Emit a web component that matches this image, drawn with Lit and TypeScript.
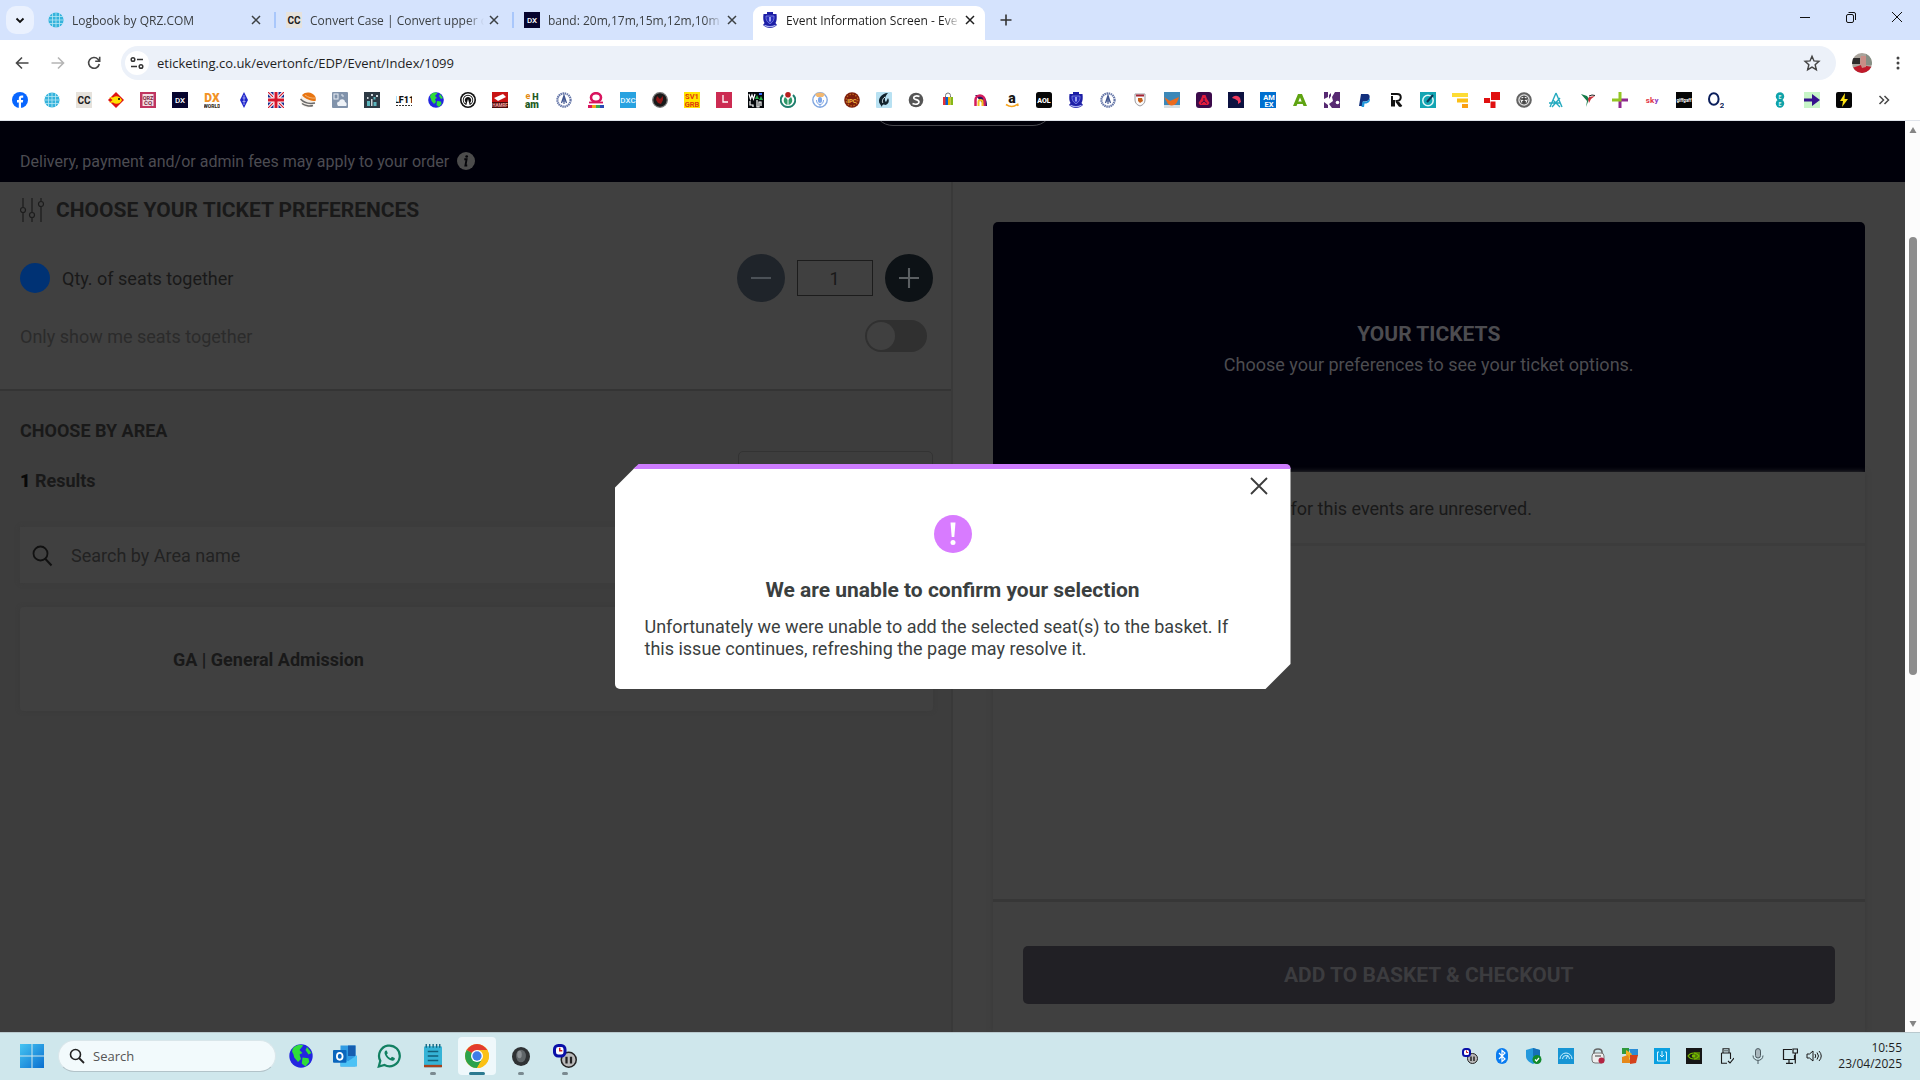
import { LitElement, html, css, svg, TemplateResult } from "lit";
import { customElement, state } from "lit/decorators.js";
import { classMap } from "lit/directives/class-map.js";

type Art = TemplateResult;

/* Short lettering used inside favicons; stays real text. */
const label = (t: string, x: number, y: number, size: number, fill: string, weight = 700) =>
  svg`<text x=${x} y=${y} font-size=${size} fill=${fill} font-weight=${weight} text-anchor="middle" font-family="Roboto, Liberation Sans, sans-serif">${t}</text>`;

const globeGrid: Art = svg`<circle cx="8" cy="8" r="7.6" fill="#35b3dc"/><path d="M0.5 4.5h15M0.5 8h15M0.5 11.5h15M4.5 1v14M8 0v16M11.500 1v14" stroke="#b5e6f4" stroke-width=".8" fill="none"/>`;
const dxDark: Art = svg`<rect width="16" height="16" fill="#06042e"/>${label("DX", 8, 11, 8, "#fff", 500)}`;
const cc: Art = svg`<rect width="16" height="16" fill="#e6e2dc"/>${label("CC", 8, 12, 10, "#1c1c1c")}`;
const earth: Art = svg`<circle cx="8" cy="8" r="7.800" fill="#2326e0"/><path d="M2.500 3c2-2.500 5-3 7-2L7 4l2 2-2 1 1 3-2 2-2.500-3L3 7 2 5zM9 9l4 .5.500 2.500-2.500 3-2.500-2zM12 2l3 4-2 1-2-3z" fill="#2fdc3a"/>`;
const crest: Art = svg`<path d="M5 0h6v2h3.500c.5 4 .3 7-1 9L15 13c-2 2-4.500 3-7 3s-5-1-7-3l1.500-2c-1.300-2-1.500-5-1-9H5z" fill="#1d1fa6"/><path d="M4 4h8c.3 4-1 6-4 7.800C5 10 3.700 8 4 4z" fill="#2a2dbf" stroke="#8d96e6" stroke-width=".7"/><path d="M7 5h2v4.500H7z" fill="#9aa2ef"/><path d="M2.500 13.200q5.500 3 11 0" stroke="#a8b0f0" stroke-width="1.200" fill="none"/>`;
const laurel: Art = svg`<circle cx="8" cy="8" r="6.600" fill="#fff" stroke="#6576a8" stroke-width="2.200" stroke-dasharray="1.500 .6"/><path d="M8 3v9M5.500 11L8 3.500l2.500 7.500M6 9h4" stroke="#40558f" stroke-width="1.200" fill="none"/>`;
const clockBot: Art = svg`<circle cx="10.500" cy="10.500" r="5" fill="#b9b9b9" stroke="#222" stroke-width="1"/><path d="M9 8.500v4.500M12 8.500v4.500" stroke="#222" stroke-width="1.500"/><rect x="1" y="1" width="7" height="7" rx="2.500" fill="#fff" stroke="#0a10a8" stroke-width="2"/><path d="M4.500 2.500v2h1.700" stroke="#c22" stroke-width="1" fill="none"/>`;

const bookmarks: Array<[string, Art | null]> = [
  ["Facebook", svg`<circle cx="8" cy="8" r="8" fill="#0866ff"/><path d="M6.800 16v-5.500H5V8h1.800V6.500c0-2 1-3 3-3h1.400v2.200H10c-.8 0-1 .4-1 1.100V8h2.200l-.4 2.500H9V16z" fill="#fff"/>`],
  ["QRZ", globeGrid],
  ["Convert Case", cc],
  ["Fish", svg`<path d="M8 0l8 8-8 8-8-8z" fill="#e01212"/><path d="M4.500 8L1 5l4 .5C8 3 12 4 14 8c-2 4-6 5-9 2.500L1 11z" fill="#ffe100"/><circle cx="11" cy="7" r="1" fill="#000"/>`],
  ["QRZCQ", svg`<rect width="16" height="16" fill="#c03560"/><rect x="2.500" y="2" width="11" height="12" fill="#f4dfe4"/>${label("QRZ", 8, 7.5, 5.5, "#7a2440")}${label("CQ", 8, 13.3, 6, "#7a2440")}`],
  ["DX", dxDark],
  ["DX World", svg`${label("DX", 8, 10, 12, "#f29325", 900)}${label("WORLD", 8, 15.5, 5, "#3d3126", 900)}`],
  ["Diamond", svg`<path d="M8 0l4 8-4 8-4-8z" fill="#1f25c9"/><path d="M8 3v10M6.500 6h3M6.500 9.500h3" stroke="#a6aaf2" stroke-width=".9"/>`],
  ["UK", svg`<rect width="16" height="16" fill="#1b2c8c"/><path d="M0 0l16 16M16 0L0 16" stroke="#fff" stroke-width="3.200"/><path d="M0 0l16 16M16 0L0 16" stroke="#d5172c" stroke-width="1.200"/><path d="M8 0v16M0 8h16" stroke="#fff" stroke-width="5"/><path d="M8 0v16M0 8h16" stroke="#d5172c" stroke-width="3"/>`],
  ["Sphere", svg`<circle cx="8" cy="8" r="7.600" fill="#f5efe8"/><path d="M2 3C6-1 13 0 15.500 5c.5 2 .3 3 0 4C11 9 5 7 2 3z" fill="#e87511"/><path d="M5 3c3 2.500 7 3.500 10.500 3" stroke="#f9c48d" stroke-width=".8" fill="none"/><path d="M.5 7c4 4.500 9 5 14.500 4M2 11.500c3 2.500 8 3 11 2" stroke="#6a6a6a" stroke-width="1.500" fill="none"/>`],
  ["Weather", svg`<rect width="16" height="16" rx="1" fill="#8193ab"/><path d="M6 14c-2-3 0-5 1-4 1-4 6-3 6 0 2 0 2 4 1 4z" fill="#eef2f7"/><rect x="2" y="2" width="4" height="5" fill="none" stroke="#e9eef5"/><path d="M9 3h2v2" stroke="#dfe6ef" fill="none"/>`],
  ["City", svg`<rect width="16" height="16" fill="#2d3a44"/><path d="M3 9h3v5H3zM9.500 5h2v2.500h-2zM9.500 10h3v4h-3z" fill="#5bb5bd"/><path d="M7 2h2v2H7zM12 3h2v2h-2zM7 7h1.500v7H7zM3 5h1.500v2H3z" fill="#cfd8dc"/>`],
  ["LF11", svg`${label("LF11", 8, 10.5, 9, "#111", 900)}<path d="M0 13.500h16" stroke="#333" stroke-dasharray="2 1"/>`],
  ["Earth", earth],
  ["Antenna", svg`<circle cx="8" cy="8" r="8" fill="#111"/><g fill="none" stroke="#fff" stroke-width="1.200"><circle cx="8" cy="8" r="5.800"/><path d="M5.500 11a3.800 3.800 0 1 1 5 0"/></g><path d="M8 7l2 7H6z" fill="#fff"/>`],
  ["Red banner", svg`<rect width="16" height="16" fill="#c81414"/><path d="M2 6l9-4 3 3-8 4z" fill="#fff"/><rect y="10" width="16" height="6" fill="#4d0b0b"/>${label("HAMRF", 8, 15, 4.5, "#f4a8a0")}`],
  ["eHam", svg`${label("e", 4, 7, 9, "#e38b12")}${label("H", 11.5, 7.5, 9, "#1e5a1e", 900)}${label("am", 8, 15.5, 10, "#1e5a1e", 900)}`],
  ["Laurel", laurel],
  ["Omega", svg`<ellipse cx="8" cy="5.500" rx="5" ry="4.300" fill="none" stroke="#d8145e" stroke-width="2.600"/><path d="M0 13h4v3H0z" fill="#d8145e"/><path d="M4 13h4v3H4z" fill="#f2a51c"/><path d="M8 13h4v3H8z" fill="#35a853"/><path d="M12 13h4v3h-4z" fill="#294bb5"/><path d="M1 10.500h14" stroke="#d8145e" stroke-width="1.800"/>`],
  ["DXC", svg`<rect width="16" height="16" fill="#28a2e0"/>${label("DXC", 8, 11, 8, "#e5f6ff", 500)}`],
  ["Dial", svg`<circle cx="8" cy="8" r="7.300" fill="#191919" stroke="#777" stroke-width="1.300"/><path d="M5 4l3 3 3-3v4l-2 4-3-1-2-3z" fill="#8f1616"/>`],
  ["SV1GRB", svg`<rect width="16" height="16" fill="#ffe500"/>${label("SV1", 8, 7.3, 7.5, "#e03a0c")}${label("GRB", 8, 15, 7.5, "#e03a0c")}`],
  ["L", svg`<rect width="16" height="16" fill="#cc2b52"/><path d="M7 3v7h5" stroke="#fff" stroke-width="1.300" fill="none"/>`],
  ["WSJT", svg`<rect width="16" height="16" fill="#05080c"/><path d="M1 2l1.500 5L4 3l1.500 4L7 2M2 9v4h3v2M9 8v7h2v-5h2v4" stroke="#fff" fill="none" stroke-width="1.200"/><path d="M7 7l2-4 2 4zM11 8l2-4 2 4z" fill="#28b04a"/><path d="M11 2h3" stroke="#3d6cff" stroke-width="2"/>`],
  ["Wreath", svg`<path d="M3 3C-2 8 2 15 8 15s10-7 5-12" fill="none" stroke="#1f7f6d" stroke-width="2"/><path d="M5 5c-3 4 0 8 3 8s6-4 3-8L8 8z" fill="#2f9868"/><circle cx="8" cy="2.800" r="2.800" fill="#b51e1e"/><path d="M8 7v6" stroke="#fff"/>`],
  ["Microphone", svg`<circle cx="8" cy="8" r="7.200" fill="#fff" stroke="#82a8e0" stroke-width="1.400"/><rect x="6" y="5" width="4" height="6" rx="2" fill="#7da6e8"/><path d="M4.500 8c0 6 7 6 7 0M8 12v3" stroke="#7da6e8" fill="none"/><path d="M3 2q5-3 10 0l-2 3H5z" fill="#f2b871"/>`],
  ["IPC", svg`<circle cx="8" cy="8" r="7.800" fill="#7d1e0b"/><circle cx="8" cy="8" r="5.800" fill="none" stroke="#c46a1c" stroke-width="1.200" stroke-dasharray="1.500 1.500"/>${label("IPC", 8, 10.500, 6, "#f6c14b")}`],
  ["Ink", svg`<rect width="16" height="16" rx="1" fill="#b8e1f2"/><path d="M12 1C5 1 1 8 4 12l2 3c0-2 1-3 3-2 3 0 5-4 3-7l-2 4c-2-2-1-6 2-9z" fill="#12222c"/><path d="M9 5c-3 2-3 5-2 6" stroke="#e9f7fc" fill="none"/>`],
  ["S", svg`<circle cx="8" cy="8" r="7.300" fill="#555"/><path d="M11.500 4.500C8 3 5 4.500 6 6.500c1 1.500 5 1 5 3.500 0 2-3 3-6.500 1.500" stroke="#fff" stroke-width="1.700" fill="none"/>`],
  ["eBay", svg`<path d="M5.500 5V3.500a2.500 2.500 0 0 1 5 0V5" fill="none" stroke="#777"/><path d="M3 5h3v8H3z" fill="#e53238"/><path d="M5.500 5H8v8H5.500z" fill="#0064d2"/><path d="M8 5h2.500v8H8z" fill="#f5af02"/><path d="M10.500 5H13v8h-2.500z" fill="#86b817"/>`],
  ["Arch", svg`<path d="M3 3h5c4 0 7 4 7 11h-2" fill="#2b1460"/><path d="M3.500 14V8a4.500 4.500 0 0 1 9 0v6" stroke="#d41c5c" stroke-width="2.500" fill="none"/><path d="M6.500 14v-4a2 2 0 0 1 4 0v4" stroke="#f5c324" stroke-width="2" fill="none"/>`],
  ["Amazon", svg`${label("a", 8, 10.500, 14, "#161616", 900)}<path d="M2 12.500q6 4 11 0M13.500 11.500l.5 2.500" stroke="#f7a51e" stroke-width="1.600" fill="none"/>`],
  ["AOL", svg`<rect width="16" height="16" rx="2.500" fill="#060606"/>${label("AOL", 8, 10.500, 7, "#fff", 900)}`],
  ["Everton", crest],
  ["Laurel crest", laurel],
  ["Shield", svg`<path d="M3 2h10v6c0 3-2 5-5 6-3-1-5-3-5-6z" fill="#fafafa" stroke="#9c9aa0"/><path d="M4 2.500h8v2H4z" fill="#a42535"/><path d="M6 6h4l1 3-3 2-2-2z" fill="#c5611c"/>`],
  ["Fox", svg`<rect width="16" height="16" fill="#3c88b8"/><rect y="13" width="16" height="3" fill="#d7dee2"/><path d="M0 5l6 4 9-4c-1 3-2 7-5 8-3 1-6 0-7-3z" fill="#ec6a1c"/>`],
  ["NatWest", svg`<rect width="16" height="16" rx="3" fill="#3b0a4a"/><path d="M6.500 3h3l1.500 4 2.500 4-1.500 2H4l-1.500-2 2.500-4z" fill="#e21b3c"/><path d="M8 6v3l-3 2.500M8 9l3 2.500" stroke="#3b0a4a" fill="none"/>`],
  ["Swoosh", svg`<rect width="16" height="16" fill="#0c1140"/><path d="M4 6c2-3 6-3 8 0l1 4-3 2V9L7 7z" fill="#ee3a5c"/>`],
  ["Amex", svg`<rect width="16" height="16" fill="#006fcf"/>${label("AM", 9, 8, 7.5, "#fff")}${label("EX", 9, 14.5, 7.5, "#fff")}`],
  ["A", svg`<path d="M6 2h4l5 12h-3.500L8 5.500 4.500 14H1z" fill="#5fa412"/><path d="M4 9.500h8v2.500H4z" fill="#5fa412"/>`],
  ["Pattern", svg`<rect width="16" height="16" fill="#572a72"/><path d="M4 0h7L8 5l1 4-4 3 3 4H4v-3L0 10V7l4-2z" fill="#fff"/><path d="M5 3l2-2v3L5 7zM1 12l2 2v2H0z" fill="#572a72"/><circle cx="13.500" cy="10.500" r="1.800" fill="#fff"/>`],
  ["PayPal", svg`<path d="M5 2h5.500c3 0 3.500 2 3 4-.6 2.600-2.500 3.500-5 3.500H7L6.300 14H3z" fill="#12307d"/><path d="M13.500 6c1.500 3-1 5.500-4.200 5.500H8.500L8 15H5.500l1-5.500c4 .5 6.500-.5 7-3.500z" fill="#1f97dc"/>`],
  ["R", svg`<path d="M3 2h6c5 0 5 6.500 0 7l4.500 5.500M3 5h1v9.500M6 14.500V8M8 9l4 5.500" stroke="#111" stroke-width="2" fill="none"/>`],
  ["Timer", svg`<rect width="16" height="16" fill="#13a5b3"/><circle cx="8" cy="8.500" r="5.200" fill="none" stroke="#e3f8fa" stroke-width="1.500"/><path d="M7 10l6-7" stroke="#0c3854" stroke-width="2"/>`],
  ["Steps", svg`<path d="M0 1h16v4H0z" fill="#fddc34"/><path d="M5 6.500h11v4H5z" fill="#fcbf17"/><path d="M10 12h6v4h-6z" fill="#fb9f12"/>`],
  ["Blocks", svg`<path d="M7 0h9v8H7zM0 6h6v5H0zM6.500 9.500h5V16h-5z" fill="#e01010"/>`],
  ["Seal", svg`<circle cx="8" cy="8" r="6.800" fill="#d6d6d6" stroke="#636363" stroke-width="2"/><circle cx="8" cy="8" r="4" fill="#eee" stroke="#555"/><path d="M8 4v8M5 7h6M6 10h4" stroke="#333" stroke-width="1.300"/>`],
  ["Compass", svg`<path d="M8 1l6 14M8 1L2 15M1 11h11M4 15l8-9M12 15L5 8" stroke="#24aabf" stroke-width="1.400" fill="none"/>`],
  ["Hummingbird", svg`<path d="M1 2l6 2 2 3-3 8 1-6z" fill="#137a49"/><path d="M9 5l6-1-4 3-2 4-1-4z" fill="#c9303a"/><path d="M9 4l3-1 3 .5" stroke="#222" fill="none"/>`],
  ["Plus", svg`<path d="M8 16V8" stroke="#8f278f" stroke-width="3"/><path d="M8 8h8" stroke="#8f278f" stroke-width="3"/><path d="M8 0v9.500M0 8h9.500" stroke="#93c524" stroke-width="3"/>`],
  ["Sky", svg`${label("sk", 6, 10.500, 8, "#e2353f")}${label("y", 12.500, 10.500, 8, "#8a3bc4")}`],
  ["giffgaff", svg`<rect width="16" height="16" fill="#050505"/>${label("giffgaff", 8, 10, 4.500, "#fff")}`],
  ["O2", svg`<ellipse cx="5.800" cy="7" rx="4.800" ry="5.800" fill="none" stroke="#0b1f5c" stroke-width="2"/>${label("2", 14, 16, 8, "#0b1f5c")}`],
  ["", null],
  ["EE", svg`<circle cx="8" cy="4.500" r="4.200" fill="#0fa2a8"/><circle cx="8" cy="11.500" r="4.200" fill="#0fa2a8"/>${label("E", 8, 6.500, 5, "#d8f5f6")}${label("E", 8, 13.500, 5, "#d8f5f6")}`],
  ["Arrow", svg`<rect width="16" height="16" fill="#c7f5c7"/><path d="M0 6.500h8V2l8 6-8 6V9.500H0z" fill="#35128c"/>`],
  ["Bolt", svg`<rect width="16" height="16" rx="2" fill="#050505"/><path d="M9 1L4 9h3l-1 6 6-8H8.500z" fill="#ffe311"/>`],
];

const trayIcons: Array<[string, Art]> = [
  ["Clock utility", clockBot],
  ["Bluetooth", svg`<rect x="2" width="12" height="16" rx="6" fill="#0a7cf0"/><path d="M5 5l6 6-3 2.500v-11L11 5l-6 6" stroke="#fff" stroke-width="1.200" fill="none"/>`],
  ["Security", svg`<path d="M0 2l7-2 7 2v6c0 4-3 6-7 8-4-2-7-4-7-8z" fill="#2499dc"/><path d="M7 0l7 2v6H7z" fill="#1670b8"/><circle cx="11" cy="11.500" r="4.500" fill="#118a2c"/><path d="M9 11.500l1.500 1.500 2.500-3" stroke="#fff" fill="none" stroke-width="1.200"/>`],
  ["Signal", svg`<rect width="16" height="16" fill="#1795d4"/><path d="M2 11a6 6 0 0 1 12 0M4.500 11a3.500 3.500 0 0 1 7 0M8 11l2-4" stroke="#c9f0ff" fill="none"/>`],
  ["Lock", svg`<path d="M4 6V4c0-4 8-4 8 0v2" fill="none" stroke="#666" stroke-width="1.600"/><rect x="2" y="5" width="12" height="10" rx="3" fill="#eee" stroke="#777"/><path d="M5 8h6" stroke="#777" stroke-width="1.500"/><circle cx="11.500" cy="12.500" r="3" fill="#b32442"/>`],
  ["AVG", svg`<path d="M0 0h7v6H0z" fill="#2f9a3c"/><path d="M7 1l9 0v7l-7-1z" fill="#2b8ed6"/><path d="M4 2l6 4-3 5-3-4z" fill="#f0b01e"/><path d="M0 9l6-2 3 8H0z" fill="#e5881a"/><path d="M8 7h8l-2 8-6 1z" fill="#d4421c"/>`],
  ["Updater", svg`<rect width="16" height="16" fill="#0aa0e0"/><path d="M5 4H3.500v9h9V4H11M8 3v6M6 7l2 2 2-2" stroke="#d5f3ff" fill="none"/>`],
  ["NVIDIA", svg`<rect width="16" height="16" fill="#161616"/><path d="M2 8c3-4 8-4 11 0-3 4-8 4-11 0z" fill="none" stroke="#76b900" stroke-width="1.200"/><path d="M8 4h6v8H8z" fill="#76b900" opacity=".6"/><circle cx="7.500" cy="8" r="1.800" fill="#76b900"/>`],
  ["USB", svg`<path d="M5 5V.7h6V5M3.500 5h9v6M3.500 5v10.300H9M10 13l2 2 4-5" stroke="#1b1b1b" stroke-width="1.100" fill="none"/><path d="M7 2v1.500M9 2v1.500" stroke="#1b1b1b"/>`],
  ["Microphone", svg`<rect x="5.500" y=".6" width="5" height="9.400" rx="2.500" fill="#a9b7bd" stroke="#4b5a60"/><path d="M3 7.500c0 6.500 10 6.500 10 0M8 12.500V16" stroke="#4b5a60" fill="none"/>`],
  ["Network", svg`<path d="M10 1.500H1.500v10h11V7M7 11.500V15M4 15.400h7M11 1h4.500v4H11zM13.300 5v10.500" stroke="#1b1b1b" stroke-width="1.200" fill="none"/>`],
  ["Volume", svg`<path d="M1 6h2.500L7 3v10L3.500 10H1zM9 6q1.500 2 0 4M11 4.500q3 3.500 0 7M13 3q4.500 5 0 10" stroke="#1b1b1b" fill="none"/>`],
];

const taskApps: Array<{ name: string; art: Art; state: string }> = [
  { name: "Earth", state: "", art: earth },
  { name: "Outlook", state: "", art: svg`<rect x="5" y="1" width="10" height="14" fill="#2f9be3"/><path d="M10 1h5v7h-5z" fill="#165eb0"/><path d="M5 8l5 3.500 6-4V15H5z" fill="#4cc2f5"/><rect y="4" width="9" height="8.500" rx=".6" fill="#0a66bd"/><ellipse cx="4.500" cy="8.200" rx="1.900" ry="2.300" fill="none" stroke="#fff" stroke-width="1.200"/>` },
  { name: "WhatsApp", state: "", art: svg`<path d="M1.200 15l1-3.800A6.900 6.900 0 1 1 5 14z" fill="none" stroke="#128062" stroke-width="1.500"/><path d="M5.500 4.500c-2 2 2.500 7.500 5.500 6.500 1-.5 1-1.500.8-1.700L10 8.500l-1 1C8 9 7 8 6.500 7l.7-.9-.7-1.700z" fill="#128062"/>` },
  { name: "Notepad", state: "open", art: svg`<rect x="2" y="1.500" width="12" height="14" rx=".8" fill="#35b3d6"/><path d="M2 14.700h12" stroke="#a8421c" stroke-width="1.600"/><path d="M3.500 0v2.500M5.800 0v2.500M8.100 0v2.500M10.400 0v2.500M12.500 0v2.500" stroke="#12657f" stroke-width=".9"/><path d="M4.500 5h7M4.500 8h7M4.500 11h7" stroke="#115f7a" stroke-width="1"/>` },
  { name: "Chrome", state: "active", art: svg`<circle cx="8" cy="8" r="8" fill="#fbc116"/><path d="M8 8L1.100 4A8 8 0 0 1 14.900 4z" fill="#e33b2e"/><path d="M1.100 4A8 8 0 0 0 8 16l3.500-6L8 8z" fill="#2ba24c"/><path d="M8 4h6.900A8 8 0 0 1 8 16l3.500-6z" fill="#fbc116"/><circle cx="8" cy="8" r="4" fill="#fff"/><circle cx="8" cy="8" r="3.100" fill="#3f7ce8"/>` },
  { name: "Knob", state: "open", art: svg`<ellipse cx="8" cy="8.300" rx="6" ry="6.300" fill="#2f3234"/><ellipse cx="8" cy="8" rx="3.300" ry="4.200" fill="#5f6568"/><ellipse cx="7" cy="7" rx="1.500" ry="2.500" fill="#8a8f92"/>` },
  { name: "Clock utility", state: "open", art: clockBot },
];

const icon = (art: Art | null, cls = "i16", box = "0 0 16 16") =>
  html`<svg class=${cls} viewBox=${box} aria-hidden="true">${art}</svg>`;

const cross: Art = svg`<path d="M4 4l8 8M12 4l-8 8" stroke="currentColor" stroke-width="1.500" fill="none"/>`;

const shared = css`
  :host { display: block; font-family: "Open Sans", "Noto Sans", sans-serif; color: #1f1f1f; }
  * { box-sizing: border-box; }
  button, input, select { font: inherit; color: inherit; border: 0; background: none; padding: 0; margin: 0; }
  button { display: grid; place-items: center; }
  h1, h2, h3, p { margin: 0; }
  svg { display: block; flex: none; }
  .i16 { width: 16px; height: 16px; }
  .i18 { width: 18px; height: 18px; }
  .i20 { width: 20px; height: 20px; }
  .i24 { width: 24px; height: 24px; }
`;

@customElement("browser-chrome")
class BrowserChrome extends LitElement {
  static styles = [shared, css`
    .tabs { display: flex; height: 40px; padding-left: 6px; background: #d5e3fd; }
    .tab-menu { width: 28px; height: 28px; margin: 6px 2px 0 0; border-radius: 10px; background: #eaf1fe; }
    .tab { position: relative; display: flex; align-items: center; width: 238px; height: 34px; margin-top: 6px; padding: 0 8px 6px 12px; gap: 8px; font-size: 12px; color: #3c4043; }
    .tab + .tab:not(.active)::before { content: ""; position: absolute; left: 0; top: 6px; width: 2px; height: 16px; background: #a9c7fb; }
    .tab .title { flex: 1; overflow: hidden; white-space: nowrap; mask-image: linear-gradient(90deg, #000 90%, transparent); }
    .tab .close { width: 20px; height: 20px; margin-left: -8px; }
    .tab.active { color: #1f1f1f; }
    .tab.active::after { content: ""; position: absolute; inset: 0 3px; z-index: 0; border-radius: 9px 9px 0 0; background: #fff; }
    .tab.active > * { position: relative; z-index: 1; }
    .new-tab { width: 28px; height: 28px; margin: 6px 0 0 4px; }
    .window { display: flex; margin-left: auto; }
    .window button { width: 46px; height: 34px; }
    .toolbar { display: flex; align-items: center; height: 46px; padding: 0 8px 0 4px; background: #fff; }
    .nav { width: 36px; height: 34px; color: #474747; }
    .nav.off { color: #b5b5b5; }
    .omnibox { display: flex; flex: 1; align-items: center; height: 34px; margin: 0 16px 0 9px; padding: 0 15px 0 4px; gap: 8px; border-radius: 17px; background: #ecf1f9; font-size: 13px; }
    .info { width: 24px; height: 24px; border-radius: 50%; background: #fff; }
    .omnibox input { flex: 1; min-width: 0; outline: 0; }
    .menu { width: 28px; height: 28px; margin-left: 12px; }
    .bookmarks { display: flex; align-items: center; height: 35px; padding: 0 28px 7px 12px; gap: 16px; background: #fff; border-bottom: 1px solid #dfe3ea; }
    .bookmarks a, .blank { flex: none; width: 16px; height: 16px; }
    .more { margin-left: auto; color: #474747; }
  `];

  private tabs = [
    { title: "Logbook by QRZ.COM", art: globeGrid },
    { title: "Convert Case | Convert upper c", art: cc },
    { title: "band: 20m,17m,15m,12m,10m", art: dxDark },
    { title: "Event Information Screen - Eve", art: crest },
  ];

  render() {
    return html`
      <div class="tabs">
        <button class="tab-menu" aria-label="Search tabs">${icon(svg`<path d="M4.500 6.500L8 10l3.500-3.500" stroke="#111" stroke-width="1.800" fill="none"/>`)}</button>
        ${this.tabs.map((t, i) => html`
          <div class=${classMap({ tab: true, active: i === 3 })}>
            ${icon(t.art)}<span class="title">${t.title}</span>
            <button class="close" aria-label="Close tab">${icon(cross)}</button>
          </div>`)}
        <button class="new-tab" aria-label="New tab">${icon(svg`<path d="M8 2.500v11M2.500 8h11" stroke="#333" stroke-width="1.600"/>`)}</button>
        <div class="window">
          <button aria-label="Minimise">${icon(svg`<path d="M3 8.500h10" stroke="#111"/>`)}</button>
          <button aria-label="Restore">${icon(svg`<rect x="3.500" y="5.500" width="7" height="8" rx="1.500" fill="none" stroke="#111"/><path d="M5.500 3.500H11A1.500 1.500 0 0 1 12.500 5v6" fill="none" stroke="#111"/>`)}</button>
          <button aria-label="Close">${icon(svg`<path d="M3 3l10 10M13 3L3 13" stroke="#111"/>`)}</button>
        </div>
      </div>
      <div class="toolbar">
        <button class="nav" aria-label="Back">${icon(svg`<path d="M14.500 8H2.500M8 2.500L2.500 8 8 13.500" stroke="currentColor" stroke-width="1.600" fill="none"/>`)}</button>
        <button class="nav off" aria-label="Forward">${icon(svg`<path d="M1.500 8h12M8 2.500L13.500 8 8 13.500" stroke="currentColor" stroke-width="1.600" fill="none"/>`)}</button>
        <button class="nav" aria-label="Reload">${icon(svg`<path d="M13.300 9A5.400 5.400 0 1 1 12 4.200L13.500 6M13.700 1.800V6.300H9.200" stroke="currentColor" stroke-width="1.600" fill="none"/>`)}</button>
        <div class="omnibox">
          <button class="info" aria-label="Site information">${icon(svg`<g fill="none" stroke="#333" stroke-width="1.500"><circle cx="4" cy="4.500" r="1.800"/><path d="M8 4.500h6M2 11.500h6"/><circle cx="12" cy="11.500" r="1.800"/></g>`)}</button>
          <input aria-label="Address" .value=${"eticketing.co.uk/evertonfc/EDP/Event/Index/1099"} />
          <button aria-label="Bookmark this tab">${icon(svg`<path d="M10 2.500l2.200 5.200 5.500.5-4.200 3.700 1.300 5.500L10 14.500l-4.800 2.900 1.300-5.500-4.200-3.700 5.500-.5z" stroke="#444" stroke-width="1.600" fill="none"/>`, "i18", "0 0 20 20")}</button>
        </div>
        <button aria-label="Profile">${icon(svg`<defs><clipPath id="av"><circle cx="10" cy="10" r="10"/></clipPath></defs><g clip-path="url(#av)"><rect width="20" height="20" fill="#a9a39b"/><path d="M0 5h8v6H0z" fill="#2d2b2a"/><path d="M14 0h6v12h-6z" fill="#868f85"/><path d="M0 20v-5l9-3 11 2v6z" fill="#c0192a"/><path d="M9 3h5v11l-4 1-2-5z" fill="#c98d86"/></g>`, "i20", "0 0 20 20")}</button>
        <button class="menu" aria-label="Menu">${icon(svg`<g fill="#444"><circle cx="8" cy="3" r="1.500"/><circle cx="8" cy="8" r="1.500"/><circle cx="8" cy="13" r="1.500"/></g>`)}</button>
      </div>
      <nav class="bookmarks" aria-label="Bookmarks">
        ${bookmarks.map(([name, art]) => art ? html`<a href="#" aria-label=${name}>${icon(art)}</a>` : html`<span class="blank"></span>`)}
        <button class="more" aria-label="More bookmarks">${icon(svg`<path d="M3.500 4l4 4-4 4M8.500 4l4 4-4 4" stroke="currentColor" stroke-width="1.500" fill="none"/>`)}</button>
      </nav>`;
  }
}

@customElement("ticket-page")
class TicketPage extends LitElement {
  @state() private qty = 1;

  static styles = [shared, css`
    :host { display: flex; min-height: 0; overflow: hidden; font-family: Roboto, "Liberation Sans", sans-serif; font-size: 18px; }
    .view { position: relative; display: flex; flex: 1; flex-direction: column; min-width: 0; background: #404040; color: #191919; }
    .banner { flex: none; height: 61px; overflow: hidden; background: #00000a; color: #4c4c52; font-size: 16px; }
    .pill { width: 180px; height: 40px; margin: -35px 0 0 calc(50% - 80px); border: 1px solid #48484e; border-radius: 20px; }
    .fees { display: flex; align-items: center; height: 36px; margin-top: 17px; padding: 0 20px; gap: 8px; }
    .fees svg { width: 18px; height: 18px; }
    .columns { display: grid; flex: 1; grid-template-columns: 1fr 1fr; min-height: 0; }
    .left { display: flex; flex-direction: column; border-right: 2px solid #393939; background: #3d3d3d; }
    .prefs { padding: 0 18px 35px 20px; border-bottom: 2px solid #343434; background: #404040; }
    .prefs h2 { display: flex; align-items: center; height: 56px; gap: 12px; font-size: 21px; }
    .row { display: flex; align-items: center; }
    .qty { height: 80px; gap: 12px; }
    .dot { width: 30px; height: 30px; border-radius: 50%; background: #003274; }
    .qty label { flex: 1; }
    .round { width: 48px; height: 48px; border-radius: 50%; background: #0d1216; color: #5b5f62; }
    .round.off { background: #1f242a; color: #4b5157; }
    .qty input { width: 76px; height: 36px; border: 1px solid #1c1c1c; text-align: center; }
    .only { height: 36px; padding-right: 6px; color: #2b2b2b; }
    .only label { flex: 1; }
    .toggle { display: flex; align-items: center; width: 62px; height: 32px; padding: 2px; border-radius: 16px; appearance: none; background: #303030; }
    .toggle::before { content: ""; width: 28px; height: 28px; border-radius: 50%; background: #404040; }
    .area { padding: 20px 18px 0 20px; }
    .area h3 { height: 40px; font-size: 18px; line-height: 40px; }
    .results { justify-content: space-between; height: 58px; font-weight: 700; }
    .results b { color: #080808; }
    .results select { width: 195px; height: 58px; border: 1px solid #333; border-radius: 5px; appearance: none; }
    .search { height: 56px; margin-top: 18px; padding: 0 10px; gap: 17px; background: #404040; box-shadow: 0 0 4px #3b3b3b; }
    .search input { flex: 1; min-width: 0; outline: 0; }
    .search input::placeholder { color: #222; opacity: 1; }
    .card { display: flex; align-items: center; width: 100%; height: 104px; margin-top: 24px; padding-left: 153px; border-radius: 4px; background: #404040; box-shadow: 0 0 4px #3b3b3b; font-weight: 700; }
    .right { display: flex; flex-direction: column; padding: 40px 40px 0; }
    .hero { display: flex; flex: none; flex-direction: column; align-items: center; justify-content: center; height: 250px; padding-top: 4px; gap: 6px; border-radius: 5px 5px 0 0; background: #00000a; color: #4c4c50; }
    .hero h2 { font-size: 21px; line-height: 26px; }
    .hero p { line-height: 24px; }
    .basket { display: flex; flex: 1; flex-direction: column; box-shadow: 0 0 5px #383838; }
    .note { height: 74px; padding-left: 298px; line-height: 74px; border-bottom: 3px solid #3c3c3c; white-space: nowrap; }
    .seats { flex: 1; border-bottom: 3px solid #373737; }
    .checkout { display: grid; padding: 44px 30px 28px; }
    .checkout button { height: 58px; border-radius: 5px; background: #212025; color: #3c3c3f; font-size: 21px; font-weight: 700; }
    .layer { position: absolute; inset: 0; display: grid; place-items: center; }
    .modal { position: relative; width: min(676px, 90%); padding: 50px 30px 29px; border-top: 5px solid #ce7cff; border-radius: 5px; background: #fff; color: #3b3f3f; clip-path: polygon(24px 0, 100% 0, 100% calc(100% - 25px), calc(100% - 25px) 100%, 0 100%, 0 24px); }
    .modal > svg { width: 38px; height: 38px; margin: -4px auto 0; }
    .modal h2 { margin-top: 22px; font-size: 21px; line-height: 30px; text-align: center; }
    .modal p { margin-top: 11px; line-height: 22px; }
    .dismiss { position: absolute; top: 5px; right: 20px; width: 24px; height: 24px; }
    .scroll { display: flex; flex: none; flex-direction: column; align-items: center; justify-content: space-between; width: 15px; padding: 5px 0 4px; background: #fcfcfc; }
    .scroll svg { width: 8px; height: 8px; }
    .track { flex: 1; width: 8px; padding-top: 103px; }
    .thumb { height: 56%; border-radius: 4px; background: #8c8c8c; }
  `];

  render() {
    return html`
      <main class="view">
        <header class="banner">
          <div class="pill"></div>
          <div class="fees">Delivery, payment and/or admin fees may apply to your order
            ${icon(svg`<circle cx="8" cy="8" r="8" fill="#4c4c4c"/><path d="M6.500 6.500h2l-1 5.500h1.600" stroke="#050509" stroke-width="1.700" fill="none"/><circle cx="8.600" cy="4" r="1.200" fill="#050509"/>`)}
          </div>
        </header>
        <div class="columns">
          <section class="left">
            <div class="prefs">
              <h2>${icon(svg`<g fill="none" stroke="#1c1c1c" stroke-width="1.200"><path d="M3 0v9M3 15v9M12 0v14M12 20v4M21 0v3M21 9v15"/><circle cx="3" cy="12" r="2.500"/><circle cx="12" cy="17" r="2.500"/><circle cx="21" cy="6" r="2.500"/></g>`, "i24", "0 0 24 24")}CHOOSE YOUR TICKET PREFERENCES</h2>
              <div class="row qty">
                <span class="dot"></span>
                <label for="qty">Qty. of seats together</label>
                <button class="round off" aria-label="Fewer seats" @click=${() => (this.qty = Math.max(1, this.qty - 1))}>${icon(svg`<path d="M0 12h24" stroke="currentColor" stroke-width="2.500"/>`, "i20", "0 0 24 24")}</button>
                <input id="qty" .value=${String(this.qty)} />
                <button class="round" aria-label="More seats" @click=${() => (this.qty += 1)}>${icon(svg`<path d="M0 12h24M12 0v24" stroke="currentColor" stroke-width="2.500"/>`, "i20", "0 0 24 24")}</button>
              </div>
              <div class="row only">
                <label for="together">Only show me seats together</label>
                <input class="toggle" id="together" type="checkbox" />
              </div>
            </div>
            <div class="area">
              <h3>CHOOSE BY AREA</h3>
              <div class="row results"><span><b>1</b> Results</span><select aria-label="Sort results"></select></div>
              <div class="row search">
                ${icon(svg`<circle cx="10.500" cy="10.500" r="7" fill="none" stroke="#111" stroke-width="1.800"/><path d="M15 15.500l6.500 7" stroke="#111" stroke-width="2"/>`, "i24", "0 0 24 24")}
                <input type="search" placeholder="Search by Area name" aria-label="Search by Area name" />
              </div>
              <button class="card">GA | General Admission</button>
            </div>
          </section>
          <section class="right">
            <div class="hero">
              <h2>YOUR TICKETS</h2>
              <p>Choose your preferences to see your ticket options.</p>
            </div>
            <div class="basket">
              <p class="note">for this events are unreserved.</p>
              <div class="seats"></div>
              <div class="checkout"><button>ADD TO BASKET &amp; CHECKOUT</button></div>
            </div>
          </section>
        </div>
        <div class="layer">
          <div class="modal" role="dialog" aria-labelledby="modal-title">
            <button class="dismiss" aria-label="Close">${icon(svg`<path d="M4 4l16 16M20 4L4 20" stroke="#3b3b3b" stroke-width="1.800"/>`, "i24", "0 0 24 24")}</button>
            ${icon(svg`<circle cx="19" cy="19" r="19" fill="#d87bff"/><path d="M16.500 7.500h5L20.300 22h-2.600z" fill="#fff"/><circle cx="19" cy="27.500" r="2.500" fill="#fff"/>`, "alert", "0 0 38 38")}
            <h2 id="modal-title">We are unable to confirm your selection</h2>
            <p>Unfortunately we were unable to add the selected seat(s) to the basket. If this issue continues, refreshing the page may resolve it.</p>
          </div>
        </div>
      </main>
      <div class="scroll">
        ${icon(svg`<path d="M8 2l7 12H1z" fill="#858585"/>`, "arrow")}
        <div class="track"><div class="thumb"></div></div>
        ${icon(svg`<path d="M8 14L1 2h14z" fill="#858585"/>`, "arrow")}
      </div>`;
  }
}

@customElement("task-bar")
class TaskBar extends LitElement {
  static styles = [shared, css`
    .bar { display: flex; align-items: center; height: 48px; padding: 0 18px 2px 20px; border-top: 1px solid #b9c9ce; background: #cfe7ec; }
    .search { display: flex; align-items: center; width: 218px; height: 32px; margin: 0 3px 0 14px; padding: 0 10px; gap: 8px; border: 1px solid #d9e6ea; border-bottom-color: #b2c3c9; border-radius: 16px; background: #f2fafc; font-size: 13px; }
    .search input { flex: 1; min-width: 0; outline: 0; }
    .search input::placeholder { color: #555; opacity: 1; }
    .app { position: relative; width: 38px; height: 38px; margin: 0 3px; border-radius: 4px; }
    .app.active { background: #eff8fb; }
    .app.open::after, .app.active::after { content: ""; position: absolute; bottom: 0; width: 6px; height: 3px; border-radius: 2px; background: #7a8a90; }
    .app.active::after { width: 16px; background: #2c7a90; }
    .tray { display: flex; align-items: center; margin-left: auto; gap: 16px; }
    .tray button:last-child { margin-left: -8px; }
    .clock { width: 80px; font-size: 12px; line-height: 16px; text-align: right; }
  `];

  render() {
    return html`
      <footer class="bar">
        <button aria-label="Start">${icon(svg`<defs><linearGradient id="w" x1="0" y1="0" x2="1" y2="1"><stop offset="0" stop-color="#46c5f2"/><stop offset="1" stop-color="#0a6fd0"/></linearGradient></defs><path d="M0 0h11.500v11.500H0zM12.500 0H24v11.500H12.500zM0 12.500h11.500V24H0zM12.500 12.500H24V24H12.500z" fill="url(#w)"/>`, "i24", "0 0 24 24")}</button>
        <div class="search">
          ${icon(svg`<circle cx="6.500" cy="6.500" r="5" fill="none" stroke="#222" stroke-width="1.600"/><path d="M10 10l5 5" stroke="#222" stroke-width="1.800"/>`)}
          <input placeholder="Search" aria-label="Search" />
        </div>
        ${taskApps.map((a) => html`<button class="app ${a.state}" aria-label=${a.name}>${icon(a.art, "i24")}</button>`)}
        <div class="tray">${trayIcons.map(([name, art]) => html`<button aria-label=${name}>${icon(art)}</button>`)}</div>
        <div class="clock">10:55<br />23/04/2025</div>
      </footer>`;
  }
}

@customElement("app-root")
class AppRoot extends LitElement {
  static styles = css`
    :host { display: flex; flex-direction: column; height: 100vh; overflow: hidden; }
    ticket-page { flex: 1; }
  `;

  render() {
    return html`<browser-chrome></browser-chrome><ticket-page></ticket-page><task-bar></task-bar>`;
  }
}
